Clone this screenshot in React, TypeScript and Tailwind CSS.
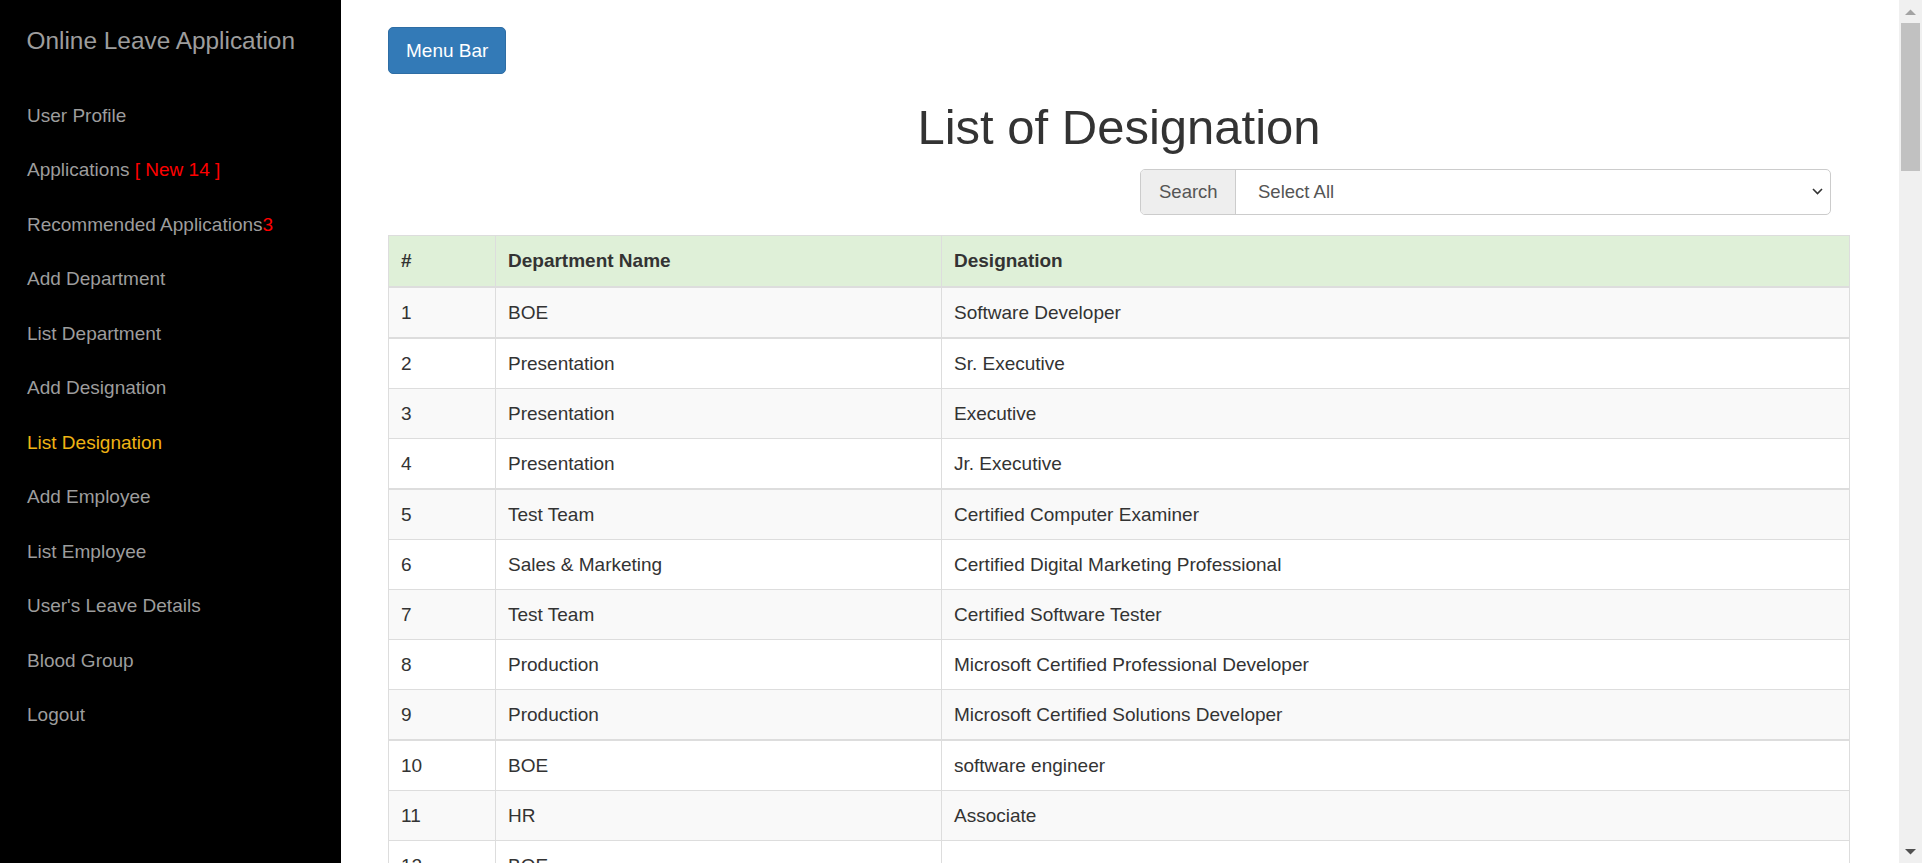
import React from "react";

const navItems: { label: React.ReactNode; active?: boolean }[] = [
  { label: "User Profile" },
  {
    label: (
      <>
        Applications <span className="text-[#ff0000]">[ New 14 ]</span>
      </>
    ),
  },
  {
    label: (
      <>
        Recommended Applications<span className="text-[#ff0000]">3</span>
      </>
    ),
  },
  { label: "Add Department" },
  { label: "List Department" },
  { label: "Add Designation" },
  { label: "List Designation", active: true },
  { label: "Add Employee" },
  { label: "List Employee" },
  { label: "User's Leave Details" },
  { label: "Blood Group" },
  { label: "Logout" },
];

const rows: { id: number; dept: string; desig: string; thick?: boolean }[] = [
  { id: 1, dept: "BOE", desig: "Software Developer", thick: true },
  { id: 2, dept: "Presentation", desig: "Sr. Executive" },
  { id: 3, dept: "Presentation", desig: "Executive" },
  { id: 4, dept: "Presentation", desig: "Jr. Executive", thick: true },
  { id: 5, dept: "Test Team", desig: "Certified Computer Examiner" },
  { id: 6, dept: "Sales & Marketing", desig: "Certified Digital Marketing Professional" },
  { id: 7, dept: "Test Team", desig: "Certified Software Tester" },
  { id: 8, dept: "Production", desig: "Microsoft Certified Professional Developer" },
  { id: 9, dept: "Production", desig: "Microsoft Certified Solutions Developer", thick: true },
  { id: 10, dept: "BOE", desig: "software engineer" },
  { id: 11, dept: "HR", desig: "Associate" },
  { id: 12, dept: "BOE", desig: "" },
  { id: 13, dept: "", desig: "" },
];

export default function App() {
  return (
    <div className="flex h-screen w-full overflow-hidden bg-white font-['Liberation_Sans',Arial,sans-serif]">
      {/* Sidebar */}
      <aside className="h-full w-[341px] shrink-0 bg-black">
        <div className="pl-[26.5px] pt-[29px] text-[24.4px] leading-[24px] text-[#9d9d9d] whitespace-nowrap">
          Online Leave Application
        </div>
        <nav className="mt-[35.5px] flex flex-col">
          {navItems.map((item, i) => (
            <a
              key={i}
              className={
                "block h-[54.5px] pl-[27px] text-[19px] leading-[54.5px] whitespace-nowrap " +
                (item.active ? "text-[#f0b414]" : "text-[#9d9d9d]")
              }
            >
              {item.label}
            </a>
          ))}
        </nav>
      </aside>

      {/* Main */}
      <main className="h-full min-w-0 flex-1 overflow-hidden pl-[47px] pr-[49px] pt-[27px] text-[#333]">
        <button className="h-[47px] rounded-[5px] border border-[#2e6da4] bg-[#337ab7] px-[17px] text-[19px] leading-[27px] text-white">
          Menu Bar
        </button>

        <h1 className="mt-[26.5px] text-center text-[49px] font-normal leading-[53px] text-[#333]">
          List of Designation
        </h1>

        <div className="mt-[15px] flex justify-end pr-[19px]">
          <div className="flex h-[46px] w-[691px] overflow-hidden rounded-[5px] border border-[#ccc]">
            <div className="flex w-[95px] shrink-0 items-center border-r border-[#ccc] bg-[#eee] pl-[18px] text-[18.5px] text-[#555]">
              Search
            </div>
            <div className="flex flex-1 items-center justify-between pl-[22px] pr-[7.5px] text-[18.5px] text-[#555]">
              <span>Select All</span>
              <svg width="11" height="7" viewBox="0 0 11 7" className="block">
                <path d="M1 1 L5.5 5.5 L10 1" fill="none" stroke="#333" strokeWidth="1.6" />
              </svg>
            </div>
          </div>
        </div>

        {/* Table */}
        <div className="mt-[20px] border border-b-0 border-[#ddd]">
          <div className="flex border-b-2 border-[#ddd] bg-[#dff0d8] text-[19px] font-bold leading-[27px]">
            <div className="w-[107px] shrink-0 border-r border-[#ddd] px-3 py-[11.5px]">#</div>
            <div className="w-[446px] shrink-0 border-r border-[#ddd] px-3 py-[11.5px]">Department Name</div>
            <div className="flex-1 px-3 py-[11.5px]">Designation</div>
          </div>
          {rows.map((r, i) => (
            <div
              key={r.id}
              className={
                "flex text-[19px] leading-[27px] border-[#ddd] " +
                (r.thick ? "border-b-2 " : "border-b ") +
                (i % 2 === 0 ? "bg-[#f9f9f9]" : "bg-white")
              }
            >
              <div className="w-[107px] shrink-0 border-r border-[#ddd] px-3 py-[11px]">
                {r.id <= 12 ? r.id : "\u00a0"}
              </div>
              <div className="w-[446px] shrink-0 border-r border-[#ddd] px-3 py-[11px]">
                {r.dept || "\u00a0"}
              </div>
              <div className="flex-1 px-3 py-[11px]">{r.desig || "\u00a0"}</div>
            </div>
          ))}
        </div>
      </main>

      {/* Scrollbar */}
      <div className="flex h-full w-[23px] shrink-0 flex-col items-center bg-[#f0f0f0]">
        <div className="flex h-[23px] w-full items-center justify-center">
          <svg width="11" height="6" viewBox="0 0 11 6">
            <path d="M0 6 L5.5 0.5 L11 6 Z" fill="#a3a3a3" />
          </svg>
        </div>
        <div className="h-[148px] w-[19px] bg-[#c1c1c1]" />
        <div className="flex-1" />
        <div className="flex h-[23px] w-full items-center justify-center">
          <svg width="11" height="6" viewBox="0 0 11 6">
            <path d="M0 0 L11 0 L5.5 5.5 Z" fill="#505050" />
          </svg>
        </div>
      </div>
    </div>
  );
}
